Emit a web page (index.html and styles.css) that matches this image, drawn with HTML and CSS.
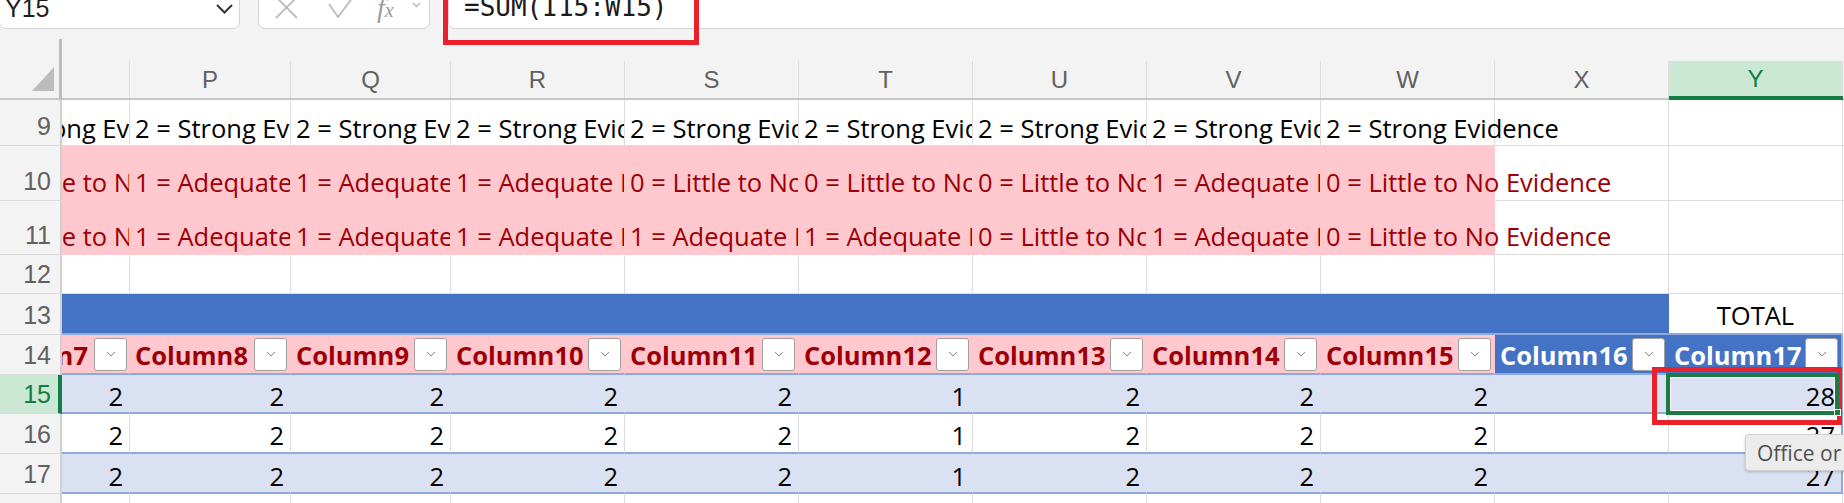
FILE: index.html
```html
<!DOCTYPE html>
<html lang="en">
<head>
<meta charset="utf-8">
<title>Workbook</title>
<link rel="stylesheet" href="styles.css">
</head>
<body>
<div class="app">
  <div class="toolbar">
    <div class="box namebox">
      <span class="ref">Y15</span>
      <svg class="chev" width="17" height="10" viewBox="0 0 17 10"><polyline points="1,1 8.5,8.5 16,1"/></svg>
    </div>
    <div class="box fnbox">
      <svg class="ic-x" width="23" height="23" viewBox="0 0 23 23"><path d="M1 1 L22 22 M22 1 L1 22"/></svg>
      <svg class="ic-ok" width="26" height="22" viewBox="0 0 26 22"><polyline points="1,8 10,21 25,1"/></svg>
      <span class="fx"><i>f</i><i class="sub">x</i></span>
      <svg class="ic-more" width="9" height="6" viewBox="0 0 9 6"><polyline points="1,1 4.5,4.5 8,1"/></svg>
    </div>
    <div class="box formula"><span class="ftext">=SUM(I15:W15)</span></div>
  </div>
  <div class="callout"></div>

  <div class="sheet">
    <!-- column letters -->
    <div class="row">
      <div class="corner"><svg width="22" height="24" viewBox="0 0 22 24"><polygon points="22,0 22,24 0,24"/></svg></div>
      <div class="colh"><span></span></div>
      <div class="colh"><span>P</span></div>
      <div class="colh"><span>Q</span></div>
      <div class="colh"><span>R</span></div>
      <div class="colh"><span>S</span></div>
      <div class="colh"><span>T</span></div>
      <div class="colh"><span>U</span></div>
      <div class="colh"><span>V</span></div>
      <div class="colh"><span>W</span></div>
      <div class="colh"><span>X</span></div>
      <div class="colh sel"><span>Y</span></div>
      <div class="colh"><span></span></div>
    </div>

    <!-- row 9 -->
    <div class="row r9">
      <div class="rh">9</div>
      <div class="c o"><span class="scroll">2 = Strong Evidence</span></div>
      <div class="c">2 = Strong Evidence</div>
      <div class="c">2 = Strong Evidence</div>
      <div class="c">2 = Strong Evidence</div>
      <div class="c">2 = Strong Evidence</div>
      <div class="c">2 = Strong Evidence</div>
      <div class="c">2 = Strong Evidence</div>
      <div class="c">2 = Strong Evidence</div>
      <div class="c ov">2 = Strong Evidence</div>
      <div class="c"></div>
      <div class="c"></div>
      <div class="c"></div>
    </div>

    <!-- row 10 -->
    <div class="row r10">
      <div class="rh">10</div>
      <div class="c pk o"><span class="scroll">0 = Little to No Evidence</span></div>
      <div class="c pk">1 = Adequate Evidence</div>
      <div class="c pk">1 = Adequate Evidence</div>
      <div class="c pk">1 = Adequate Evidence</div>
      <div class="c pk">0 = Little to No Evidence</div>
      <div class="c pk">0 = Little to No Evidence</div>
      <div class="c pk">0 = Little to No Evidence</div>
      <div class="c pk">1 = Adequate Evidence</div>
      <div class="c pk ov">0 = Little to No Evidence</div>
      <div class="c"></div>
      <div class="c"></div>
      <div class="c"></div>
    </div>

    <!-- row 11 -->
    <div class="row r11">
      <div class="rh">11</div>
      <div class="c pk o"><span class="scroll">0 = Little to No Evidence</span></div>
      <div class="c pk">1 = Adequate Evidence</div>
      <div class="c pk">1 = Adequate Evidence</div>
      <div class="c pk">1 = Adequate Evidence</div>
      <div class="c pk">1 = Adequate Evidence</div>
      <div class="c pk">1 = Adequate Evidence</div>
      <div class="c pk">0 = Little to No Evidence</div>
      <div class="c pk">1 = Adequate Evidence</div>
      <div class="c pk ov">0 = Little to No Evidence</div>
      <div class="c"></div>
      <div class="c"></div>
      <div class="c"></div>
    </div>

    <!-- row 12 -->
    <div class="row r12">
      <div class="rh">12</div>
      <div class="c"></div><div class="c"></div><div class="c"></div><div class="c"></div>
      <div class="c"></div><div class="c"></div><div class="c"></div><div class="c"></div>
      <div class="c"></div><div class="c"></div><div class="c"></div><div class="c"></div>
    </div>

    <!-- row 13: title band -->
    <div class="row r13">
      <div class="rh">13</div>
      <div class="banner"></div>
      <div class="c ctr top">TOTAL</div>
      <div class="c"></div>
    </div>

    <!-- row 14: table header -->
    <div class="row r14">
      <div class="rh">14</div>
      <div class="c hd o"><span class="scroll"><span class="lbl">Column7</span><span class="dd"><svg width="10" height="6" viewBox="0 0 10 6"><polyline points="1,1 5,5 9,1"/></svg></span></span></div>
      <div class="c hd"><span class="lbl">Column8</span><span class="dd"><svg width="10" height="6" viewBox="0 0 10 6"><polyline points="1,1 5,5 9,1"/></svg></span></div>
      <div class="c hd"><span class="lbl">Column9</span><span class="dd"><svg width="10" height="6" viewBox="0 0 10 6"><polyline points="1,1 5,5 9,1"/></svg></span></div>
      <div class="c hd"><span class="lbl">Column10</span><span class="dd"><svg width="10" height="6" viewBox="0 0 10 6"><polyline points="1,1 5,5 9,1"/></svg></span></div>
      <div class="c hd"><span class="lbl">Column11</span><span class="dd"><svg width="10" height="6" viewBox="0 0 10 6"><polyline points="1,1 5,5 9,1"/></svg></span></div>
      <div class="c hd"><span class="lbl">Column12</span><span class="dd"><svg width="10" height="6" viewBox="0 0 10 6"><polyline points="1,1 5,5 9,1"/></svg></span></div>
      <div class="c hd"><span class="lbl">Column13</span><span class="dd"><svg width="10" height="6" viewBox="0 0 10 6"><polyline points="1,1 5,5 9,1"/></svg></span></div>
      <div class="c hd"><span class="lbl">Column14</span><span class="dd"><svg width="10" height="6" viewBox="0 0 10 6"><polyline points="1,1 5,5 9,1"/></svg></span></div>
      <div class="c hd"><span class="lbl">Column15</span><span class="dd"><svg width="10" height="6" viewBox="0 0 10 6"><polyline points="1,1 5,5 9,1"/></svg></span></div>
      <div class="c hd hb"><span class="lbl">Column16</span><span class="dd"><svg width="10" height="6" viewBox="0 0 10 6"><polyline points="1,1 5,5 9,1"/></svg></span></div>
      <div class="c hd hb last"><span class="lbl">Column17</span><span class="dd"><svg width="10" height="6" viewBox="0 0 10 6"><polyline points="1,1 5,5 9,1"/></svg></span></div>
      <div class="c"></div>
    </div>

    <!-- row 15 -->
    <div class="row r15">
      <div class="rh sel">15</div>
      <div class="c tb band n">2</div>
      <div class="c tb band n">2</div>
      <div class="c tb band n">2</div>
      <div class="c tb band n">2</div>
      <div class="c tb band n">2</div>
      <div class="c tb band n">1</div>
      <div class="c tb band n">2</div>
      <div class="c tb band n">2</div>
      <div class="c tb band n">2</div>
      <div class="c tb band"></div>
      <div class="c tb band n last active">28<span class="handle"></span></div>
      <div class="c"></div>
    </div>

    <!-- row 16 -->
    <div class="row r16">
      <div class="rh">16</div>
      <div class="c tb n">2</div>
      <div class="c tb n">2</div>
      <div class="c tb n">2</div>
      <div class="c tb n">2</div>
      <div class="c tb n">2</div>
      <div class="c tb n">1</div>
      <div class="c tb n">2</div>
      <div class="c tb n">2</div>
      <div class="c tb n">2</div>
      <div class="c tb"></div>
      <div class="c tb n last">27</div>
      <div class="c"></div>
    </div>

    <!-- row 17 -->
    <div class="row r17">
      <div class="rh">17</div>
      <div class="c tb band n">2</div>
      <div class="c tb band n">2</div>
      <div class="c tb band n">2</div>
      <div class="c tb band n">2</div>
      <div class="c tb band n">2</div>
      <div class="c tb band n">1</div>
      <div class="c tb band n">2</div>
      <div class="c tb band n">2</div>
      <div class="c tb band n">2</div>
      <div class="c tb band"></div>
      <div class="c tb band n last">27</div>
      <div class="c"></div>
    </div>

    <!-- row 18 (only its top edge is in view) -->
    <div class="row r18">
      <div class="rh"></div>
      <div class="c"></div><div class="c"></div><div class="c"></div><div class="c"></div>
      <div class="c"></div><div class="c"></div><div class="c"></div><div class="c"></div>
      <div class="c"></div><div class="c"></div><div class="c"></div><div class="c"></div>
    </div>
  </div>

  <div class="tip">Office or</div>
</div>
</body>
</html>
```

FILE: styles.css
```css
* { box-sizing: border-box; }

html, body {
  margin: 0;
  padding: 0;
}

body {
  width: 1844px;
  height: 503px;
  overflow: hidden;
  background: #fff;
  font-family: "Open Sans", "Noto Sans", sans-serif;
}

.app {
  position: relative;
  width: 1844px;
  height: 503px;
  overflow: hidden;
}

/* ---------- formula bar ---------- */
.toolbar {
  display: flex;
  align-items: flex-start;
  height: 54px;
  margin-top: -15px;
  background: #f3f3f3;
}

.box {
  height: 44px;
  background: #fff;
  border: 1px solid #d4d4d4;
  border-radius: 0 0 7px 7px;
  display: flex;
  align-items: center;
  flex: none;
}

.namebox {
  width: 241px;
  margin-left: -1px;
  padding: 3px 6px 0 5px;
  justify-content: space-between;
}

.ref {
  font-family: "Liberation Sans", Arial, sans-serif;
  font-size: 25px;
  color: #1f1f1f;
}

.chev polyline {
  fill: none;
  stroke: #333;
  stroke-width: 2;
}

.fnbox {
  width: 172px;
  margin-left: 18px;
  padding-left: 16px;
}

.ic-x path,
.ic-ok polyline {
  fill: none;
  stroke: #bcbcbc;
  stroke-width: 1.8;
}

.ic-ok { margin-left: 30px; }

.fx {
  margin-left: 23px;
  width: 24px;
  display: flex;
  align-items: baseline;
  color: #9c9c9c;
  font-family: "Liberation Serif", serif;
  padding-top: 1px;
}

.fx i { font-size: 28px; }
.fx .sub { font-size: 20px; margin-left: 0; }

.ic-more {
  margin-left: 11px;
  margin-top: -4px;
}

.ic-more polyline {
  fill: none;
  stroke: #b5b5b5;
  stroke-width: 1.3;
}

.formula {
  flex: 1;
  margin-left: 18px;
  margin-right: -10px;
  border-radius: 0 0 0 7px;
  padding-left: 15px;
}

.ftext {
  font-family: "DejaVu Sans Mono", "Liberation Mono", monospace;
  font-size: 26px;
  color: #1b1b1b;
  white-space: nowrap;
}

.callout {
  position: absolute;
  left: 443px;
  top: -10px;
  width: 256px;
  height: 55px;
  border: 5px solid #e8212b;
  z-index: 5;
}

/* ---------- grid ---------- */
.sheet {
  display: grid;
  grid-template-columns: 62px 68px 161px 160px repeat(8, 174px) 1fr;
  grid-template-rows: 61px 46px 55px 54px 39px 41px 40px 39px 40px 40px 20px;
}

.row { display: contents; }

.corner {
  background: #f3f3f3;
  border-right: 3px solid #bdbdbd;
  border-bottom: 2px solid #c6c6c6;
  display: flex;
  justify-content: flex-end;
  align-items: flex-end;
  padding: 0 5px 7px 0;
}

.corner polygon { fill: #bcbcbc; }

.colh {
  background: #f3f3f3;
  border-bottom: 2px solid #c6c6c6;
  display: flex;
  align-items: flex-end;
  min-width: 0;
}

.colh span {
  flex: 1;
  height: 37px;
  border-right: 1px solid #dcdcdc;
  display: flex;
  align-items: center;
  justify-content: center;
  font-family: "Liberation Sans", Arial, sans-serif;
  font-size: 24px;
  color: #616161;
}

.colh.sel { border-bottom: 4px solid #137d44; }

.colh.sel span {
  height: 35px;
  background: #cbe8d4;
  color: #137d44;
}

/* row numbers sit near the bottom of their row */
.rh {
  background: #f3f3f3;
  border-right: 2px solid #d0d0d0;
  border-bottom: 1px solid #dcdcdc;
  display: flex;
  align-items: flex-end;
  justify-content: flex-end;
  padding: 0 9px 4px 0;
  font-family: "Liberation Sans", Arial, sans-serif;
  font-size: 25px;
  color: #616161;
  overflow: hidden;
}

.rh.sel {
  background: #cbe8d4;
  color: #137d44;
  border-right: 4px solid #137d44;
  padding-right: 7px;
}

.c {
  border-right: 1px solid #dcdcdc;
  border-bottom: 1px solid #dcdcdc;
  display: flex;
  align-items: flex-end;
  padding: 0 5px;
  white-space: nowrap;
  overflow: hidden;
  min-width: 0;
  font-size: 25.5px;
  line-height: 26px;
  color: #000;
}

.c.ov { overflow: visible; }

/* first visible column is scrolled partly out of view */
.c.o {
  padding-left: 0;
  padding-right: 0;
}

.scroll {
  flex: none;
  width: 160px;
  margin-left: -92px;
  padding-left: 5px;
  align-self: stretch;
  display: flex;
  align-items: flex-end;
  white-space: nowrap;
}

.pk {
  background: #ffc7ce;
  border-color: #ffc7ce;
  color: #9c0006;
}

.n {
  justify-content: flex-end;
  padding-right: 6px;
}

.ctr { justify-content: center; }

.banner {
  grid-column: span 10;
  background: #4472c4;
  border-bottom: 2px solid #8ea9db;
}

.c.top { border-bottom: 2px solid #8ea9db; }

/* table body */
.tb { border-bottom: 2px solid #8ea9db; }

.band {
  background: #d9e1f2;
  border-right-color: #d9e1f2;
}

.last { border-right: 2px solid #8ea9db; }
.band.last { border-right-color: #8ea9db; }

/* header row of the table */
.hd {
  background: #ffc7ce;
  border-right-color: #ffc7ce;
  border-bottom: 2px solid #8ea9db;
  color: #9c0006;
  font-weight: 700;
  padding-right: 0;
}

.hd.hb {
  background: #4472c4;
  border-right-color: #4472c4;
  color: #fff;
}

.hd.hb.last { border-right-color: #8ea9db; }

.lbl {
  overflow: hidden;
  min-width: 0;
}

.dd {
  flex: none;
  width: 33px;
  height: 33px;
  margin-left: auto;
  margin-right: 3px;
  align-self: center;
  background: #fff;
  border: 1px solid #a0a0a0;
  border-radius: 3px;
  display: flex;
  align-items: center;
  justify-content: center;
}

.dd polyline {
  fill: none;
  stroke: #8a8a8a;
  stroke-width: 1;
}

/* row text baselines */
.r9 > .c { padding-bottom: 4px; }
.r10 > .c, .r11 > .c { padding-bottom: 5px; }
.r13 > .c { padding-bottom: 5px; }
.r14 > .c { padding-top: 5px; padding-bottom: 5px; }
.r15 > .c { padding-bottom: 3px; }
.r16 > .c { padding-bottom: 4px; }
.r17 > .c { padding-bottom: 3px; }

/* active cell */
.active {
  position: relative;
  overflow: visible;
}

.active::before {
  content: "";
  position: absolute;
  left: -17px;
  top: -8px;
  right: -1px;
  bottom: -13px;
  border: 5px solid #e8212b;
  z-index: 3;
}

.active::after {
  content: "";
  position: absolute;
  left: -3px;
  top: -2px;
  right: 2px;
  bottom: -3px;
  border: 4px solid #1d7a45;
  box-shadow: inset 0 0 0 1px #fff;
  z-index: 4;
}

.handle {
  position: absolute;
  right: 0;
  bottom: -4px;
  width: 7px;
  height: 7px;
  background: #1d7a45;
  border: 1px solid #fff;
  z-index: 5;
}

/* hover tip */
.tip {
  position: absolute;
  left: 1745px;
  top: 434px;
  width: 140px;
  height: 37px;
  background: #ececec;
  border: 1px solid #d0d0d0;
  border-radius: 4px;
  box-shadow: 0 1px 3px rgba(0, 0, 0, 0.22);
  display: flex;
  align-items: center;
  padding-left: 11px;
  font-family: "Open Sans", sans-serif;
  font-size: 21px;
  color: #505050;
  white-space: nowrap;
  z-index: 6;
}
```
